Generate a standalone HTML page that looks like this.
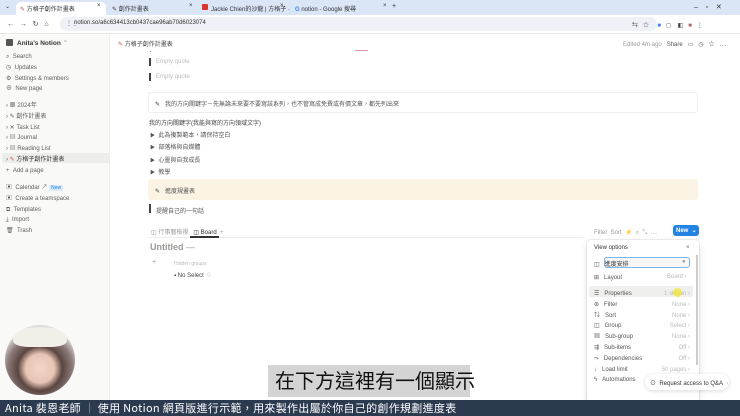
<!DOCTYPE html>
<html><head><meta charset="utf-8"><style>
*{margin:0;padding:0;box-sizing:border-box}
body{width:740px;height:416px;overflow:hidden;position:relative;background:#fff;font-family:"Liberation Sans","Noto Sans CJK TC",sans-serif;color:#37352f}
.a{position:absolute;white-space:nowrap}
.s{font-size:6px;color:#5f5e5b}
.g{color:#aaa}
</style></head><body>
<div class="a" style="left:0;top:0;width:740px;height:15px;background:#dae5f6"></div>
<div class="a" style="left:16px;top:2px;width:90px;height:13px;background:#fff;border-radius:5px 5px 0 0"></div>
<div class="a s" style="left:5px;top:3px;color:#333">⌄</div>
<div class="a s" style="left:20px;top:4px;color:#333"><span style="color:#c55">✎</span> 方格子創作計畫表</div>
<div class="a s" style="left:97px;top:3px;color:#333">×</div>
<div class="a s" style="left:112px;top:4px;color:#333">✎ 創作計畫表</div>
<div class="a s" style="left:189px;top:3px;color:#333">×</div>
<div class="a" style="left:202px;top:4px;width:6px;height:6px;background:#d33;border-radius:1px"></div>
<div class="a s" style="left:211px;top:4px;color:#333">Jackie Chien的沙龍 | 方格子 ·</div>
<div class="a s" style="left:280px;top:3px;color:#333">×</div>
<div class="a s" style="left:295px;top:4px;color:#333"><b style="color:#4285f4">G</b> notion - Google 搜尋</div>
<div class="a s" style="left:383px;top:3px;color:#333">×</div>
<div class="a s" style="left:392px;top:3px;color:#333;font-size:7px">+</div>
<div class="a s" style="left:694px;top:3px;color:#333;font-size:7px">–&nbsp;&nbsp;&nbsp;&nbsp;▫&nbsp;&nbsp;&nbsp;&nbsp;✕</div>
<div class="a" style="left:0;top:15px;width:740px;height:19px;background:#fff;border-bottom:1px solid #e8e8e8"></div>
<div class="a" style="left:60px;top:17px;width:597px;height:14px;background:#eef1f6;border-radius:7px"></div>
<div class="a s" style="left:7px;top:20px;color:#444;font-size:7px">←&nbsp;&nbsp;&nbsp;→&nbsp;&nbsp;&nbsp;↻&nbsp;&nbsp;&nbsp;⌂</div>
<div class="a s" style="left:66px;top:20px;color:#555">⋮⋮</div>
<div class="a s" style="left:74px;top:20px;color:#333">notion.so/a6c634413cb0437cae96ab70d6023074</div>
<div class="a s" style="left:632px;top:20px;color:#444">⇆&nbsp;&nbsp;&nbsp;☆&nbsp;&nbsp;&nbsp;&nbsp;&nbsp;<span style="color:#4285f4">■</span>&nbsp;&nbsp;&nbsp;◻&nbsp;&nbsp;&nbsp;&nbsp;◧&nbsp;&nbsp;&nbsp;<span style="color:#a66">■</span>&nbsp;&nbsp;&nbsp;⋮</div>
<div class="a" style="left:0;top:35px;width:110px;height:365px;background:#f9f9f8;border-right:1px solid #eee"></div>
<div class="a" style="left:2px;top:153px;width:108px;height:10px;background:#ededeb;border-radius:2px"></div>
<div class="a" style="left:6px;top:39px;width:7px;height:7px;background:#555;border-radius:1px"></div>
<div class="a" style="left:17px;top:39px;font-size:6.5px;font-weight:bold;color:#333">Anita's Notion <span style="font-weight:normal;color:#999">⌃</span></div>
<div class="a s" style="left:6px;top:52px;line-height:10.8px">⌕&nbsp;&nbsp;Search<br>◷&nbsp;&nbsp;Updates<br>⚙&nbsp;&nbsp;Settings &amp; members<br>⊕&nbsp;&nbsp;New page</div>
<div class="a s" style="left:6px;top:101px;line-height:10.8px">›&nbsp;<b style="color:#444">▦</b> 2024年<br>›&nbsp;✎ 創作計畫表<br>›&nbsp;✕ Task List<br>›&nbsp;▤ Journal<br>›&nbsp;▤ Reading List<br>›&nbsp;<span style="color:#c55">✎</span> <span style="color:#333">方格子創作計畫表</span><br>+&nbsp;&nbsp;Add a page</div>
<div class="a s" style="left:6px;top:183px;line-height:10.8px">▣&nbsp;&nbsp;Calendar ↗ <span style="background:#dbeafb;color:#2383e2;font-size:5px;padding:0 2px">New</span><br>▣&nbsp;&nbsp;Create a teamspace<br>⧉&nbsp;&nbsp;Templates<br>⤓&nbsp;&nbsp;Import<br>🗑&nbsp;&nbsp;Trash</div>
<div class="a s" style="left:118px;top:39px;color:#444"><span style="color:#c55">✎</span> 方格子創作計畫表</div>
<div class="a s" style="left:623px;top:39px;color:#999">Edited 4m ago&nbsp;&nbsp;&nbsp;<span style="color:#555">Share&nbsp;&nbsp;&nbsp;▭&nbsp;&nbsp;&nbsp;◷&nbsp;&nbsp;&nbsp;☆&nbsp;&nbsp;&nbsp;⋯</span></div>
<div class="a" style="left:150px;top:51px;width:1px;height:1px;background:#888"></div>
<div class="a" style="left:355px;top:50px;width:13px;height:1px;background:#d9a"></div>
<div class="a" style="left:149px;top:58px;width:1.5px;height:8px;background:#444"></div>
<div class="a s" style="left:156px;top:59px;color:#bbb">Empty quote</div>
<div class="a" style="left:149px;top:73px;width:1.5px;height:8px;background:#444"></div>
<div class="a s" style="left:156px;top:74px;color:#bbb">Empty quote</div>
<div class="a" style="left:148px;top:92px;width:550px;height:21px;border:1px solid #eee;border-radius:3px"></div>
<div class="a s" style="left:155px;top:99px;color:#333">✎&nbsp;&nbsp;&nbsp;<span style="color:#555">我的方向關鍵字－先無論未來要不要寫該系列，也不管寫成免費或有價文章，都先列出來</span></div>
<div class="a s" style="left:149px;top:118px;color:#444">我的方向關鍵字(我能與寫的方向領域文字)</div>
<div class="a s" style="left:150px;top:130px;line-height:12.4px;color:#555"><span style="font-size:5px">▶</span>&nbsp;&nbsp;此為複製範本，請保持空白<br><span style="font-size:5px">▶</span>&nbsp;&nbsp;部落格與自媒體<br><span style="font-size:5px">▶</span>&nbsp;&nbsp;心靈與自我成長<br><span style="font-size:5px">▶</span>&nbsp;&nbsp;教學</div>
<div class="a" style="left:148px;top:179px;width:550px;height:21px;background:#fbf3e4;border-radius:3px"></div>
<div class="a s" style="left:155px;top:186px;color:#333">✎&nbsp;&nbsp;&nbsp;<span style="color:#555">進度規畫表</span></div>
<div class="a" style="left:149px;top:204px;width:1.5px;height:9px;background:#444"></div>
<div class="a s" style="left:156px;top:206px;color:#555">提醒自己的一句話</div>
<div class="a" style="left:148px;top:237px;width:435px;height:1px;background:#eee"></div>
<div class="a s" style="left:151px;top:227px;color:#999">◫ 行事曆檢視&nbsp;&nbsp;&nbsp;<span style="color:#333">◫ Board</span>&nbsp;&nbsp;+</div>
<div class="a" style="left:190px;top:236px;width:29px;height:1.5px;background:#333"></div>
<div class="a s" style="left:594px;top:227px;color:#999">Filter&nbsp;&nbsp;Sort&nbsp;&nbsp;⚡&nbsp;&nbsp;⌕&nbsp;&nbsp;⤡&nbsp;&nbsp;⋯</div>
<div class="a" style="left:673px;top:225px;width:26px;height:11px;background:#2383e2;border-radius:3px"></div>
<div class="a" style="left:676px;top:227px;font-size:6px;color:#fff;font-weight:bold">New&nbsp;&nbsp;⌄</div>
<div class="a" style="left:150px;top:242px;font-size:9px;font-weight:bold;color:#9b9a97">Untitled <span style="font-weight:normal">—</span></div>
<div class="a s" style="left:152px;top:259px;color:#999;font-size:7px">+</div>
<div class="a s" style="left:174px;top:261px;color:#bbb;font-size:5px">Hidden groups</div>
<div class="a s" style="left:174px;top:273px;color:#444">▪ No Select&nbsp;&nbsp;<span style="color:#ccc">0</span></div>
<div class="a" style="left:587px;top:240px;width:112px;height:162px;background:#fff;box-shadow:0 0 0 1px rgba(0,0,0,.06),0 3px 8px rgba(0,0,0,.12);border-radius:4px"></div>
<div class="a s" style="left:594px;top:245px;color:#333">View options</div>
<div class="a s" style="left:686px;top:245px;color:#666">×</div>
<div class="a" style="left:604px;top:257px;width:86px;height:11px;border:1px solid #7cb4ee;border-radius:3px;background:#f7f7f5"></div>
<div class="a s" style="left:594px;top:259px;color:#555">◫&nbsp;&nbsp;&nbsp;<span style="color:#333">進度安排</span></div>
<div class="a s" style="left:682px;top:259px;color:#999">●</div>
<div class="a s" style="left:594px;top:274px;color:#555">⊞&nbsp;&nbsp;&nbsp;Layout</div><div class="a s" style="left:667px;top:274px;color:#bbb">Board ›</div>
<div class="a" style="left:589px;top:286px;width:104px;height:11px;background:#efefed;border-radius:2px"></div>
<div class="a s" style="left:594px;top:289px;color:#555;line-height:10.8px">☰&nbsp;&nbsp;&nbsp;Properties<br>⊛&nbsp;&nbsp;&nbsp;Filter<br>⇅&nbsp;&nbsp;&nbsp;Sort<br>◫&nbsp;&nbsp;&nbsp;Group<br>▦&nbsp;&nbsp;&nbsp;Sub-group<br>⇶&nbsp;&nbsp;&nbsp;Sub-items<br>⤳&nbsp;&nbsp;&nbsp;Dependencies<br>↓&nbsp;&nbsp;&nbsp;Load limit<br>ϟ&nbsp;&nbsp;&nbsp;Automations</div>
<div class="a s" style="left:640px;top:289px;width:50px;text-align:right;color:#bbb;line-height:10.8px">1 shown ›<br>None ›<br>None ›<br>Select ›<br>None ›<br>Off ›<br>Off ›<br>50 pages ›<br>&nbsp;</div>
<div class="a" style="left:673px;top:288px;width:9px;height:9px;background:rgba(240,230,60,.8);border-radius:50%"></div>
<div class="a" style="left:696px;top:255px;width:2px;height:110px;background:#ccc"></div>
<div class="a" style="left:645px;top:374px;width:84px;height:16px;background:#fff;border-radius:8px;box-shadow:0 1px 4px rgba(0,0,0,.15)"></div>
<div class="a s" style="left:650px;top:378px;color:#333">⊙&nbsp;&nbsp;Request access to Q&amp;A&nbsp;&nbsp;<span style="color:#bbb">›</span></div>
<div class="a" style="left:5px;top:325px;width:70px;height:70px;border-radius:50%;background:radial-gradient(circle at 50% 62%,#f2d6c8 0,#e8c4b4 26%,#5a4540 40%,#8a7a78 58%,#ddd 75%);overflow:hidden">
<div style="position:absolute;left:8px;top:2px;width:54px;height:20px;border-radius:50% 50% 30% 30%;background:#f2efe8"></div></div>
<div class="a" style="left:268px;top:365px;width:202px;height:32px;background:#d4d4d4"></div>
<div class="a" style="left:275px;top:369px;font-size:20px;color:#111;font-family:'Noto Sans CJK TC',sans-serif;line-height:22px">在下方這裡有一個顯示</div>
<div class="a" style="left:0;top:400px;width:740px;height:16px;background:#2b3a4f"></div>
<div class="a" style="left:5px;top:402px;font-size:11px;letter-spacing:0.3px;color:#fff;line-height:12px;font-family:'Noto Sans CJK TC',sans-serif">Anita 裴恩老師 <span style="color:#bbb">｜</span> 使用 Notion 網頁版進行示範，用來製作出屬於你自己的創作規劃進度表</div>
</body></html>
